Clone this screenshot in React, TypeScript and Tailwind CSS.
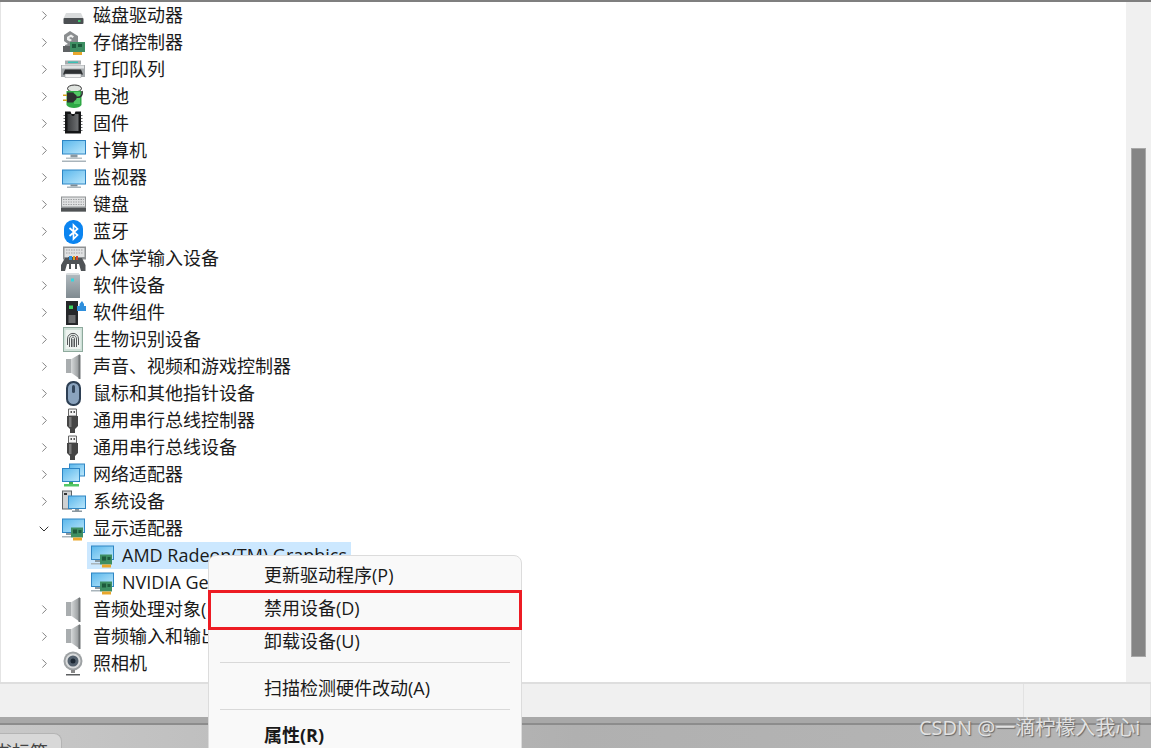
import { ChevronDown, ChevronRight } from 'lucide-react';

function Screen({ x, y, w, h }: { x: number; y: number; w: number; h: number }) {
  return (
    <>
      <rect x={x} y={y} width={w} height={h} fill="#2f86c4" />
      <rect x={x + 1} y={y + 1} width={w - 2} height={h - 2} fill="url(#screen)" />
    </>
  );
}

const CARD = (
  <>
    <path d="M11 11.500h12v10H11z" fill="#3e8f63" />
    <path d="M13 13.500h4v4h-4zM18.500 14h3v3h-3z" fill="#1e5a3c" />
    <path d="M13 21.500h9v3h-9z" fill="#e8a72c" />
  </>
);

const SPEAKER = (
  <>
    <path d="M6 5h5.500v14H6z" fill="#a9adaf" />
    <path d="M11.500 5L20 0v25l-8.500-6z" fill="url(#cone)" />
    <path d="M18.500 1H20.500v24h-2z" fill="#6f7375" />
  </>
);

const USB = (
  <>
    <path d="M8.500 1h8v7h-8z" fill="#f4f4f4" stroke="#666" />
    <path d="M10.500 3h1.500v2h-1.500zM13.500 3h1.500v2h-1.500z" fill="#555" />
    <path d="M7 8h11v10l-3 3v4h-5v-4l-3-3z" fill="#454545" />
    <path d="M9 9h2.500v10H9z" fill="#7a7a7a" />
  </>
);

const ICONS: Record<string, React.ReactNode> = {
  disk: (
    <>
      <path d="M6 10h15l2.500 5.500h-20z" fill="#d9dbdc" />
      <rect x="3.500" y="15" width="20" height="6" rx="1" fill="#4b4f52" />
      <rect x="18" y="17" width="2.500" height="2" fill="#3ec46d" />
    </>
  ),
  storage: (
    <>
      <path d="M10 1l8 5v6l-3 3 1 4H5v-4l3-1-4-3V5z" fill="#8a8d8f" />
      <path d="M7 7l4-2.500 3 2-1.500 1.500L11 7 9 8l3 2-2 1.500L7 10z" fill="#eceded" />
      <path d="M3 16h9v6H3z" fill="#5f6264" />
      <path d="M10 12h15v10H10z" fill="#3e8f63" />
      <path d="M12 14h4v4h-4zM18 14h4v3h-4z" fill="#1e5a3c" />
      <path d="M13 22h9v3h-9z" fill="#e8a72c" />
    </>
  ),
  printer: (
    <>
      <path d="M5 3.500h16v4H5z" fill="#a8acae" />
      <path d="M8 4.500h10v1.500H8z" fill="#39c0b5" />
      <path d="M1 8h24v12H1z" fill="#a4a8ab" />
      <path d="M2 8.500h22v3H2z" fill="#e0e2e3" />
      <path d="M5 12.500h16l2 5H3z" fill="#2e3133" />
      <path d="M5 17h16v3.500H5z" fill="#f3f3f3" stroke="#8d9194" strokeWidth=".5" />
    </>
  ),
  battery: (
    <>
      <ellipse cx="14.500" cy="4.500" rx="7" ry="3.500" fill="#dfe3df" stroke="#333" />
      <path d="M6.500 7h15v14c-2 4-13 4-15 0z" fill="#2fa845" />
      <path d="M14 8h6v12h-6z" fill="#52c765" />
      <path d="M8 9h4v3H8z" fill="#9fe6a0" />
      <path d="M3 10.500h4.500v1.500H3zM3 15.500h4.500V17H3z" fill="#d4a21e" />
      <path d="M7 8.500h6l3.500 3v3.500l-3.500 3.500H7z" fill="#2d2f31" />
      <path d="M16 13c4 1 7-1 6-6" fill="none" stroke="#2d2f31" strokeWidth="1.500" />
    </>
  ),
  chip: (
    <>
      <path d="M5 0.500h5.500l1 2.500h3l1-2.500H21v22H5z" fill="#141516" />
      <path d="M7.500 3H11l1 2h2l1-2h3.500v17h-11z" fill="url(#chip)" />
      <path d="M3.500 4H5v1H3.500zM3.500 7H5v1H3.500zM3.500 10H5v1H3.500zM3.500 13H5v1H3.500zM3.500 16H5v1H3.500zM3.500 19H5v1H3.500zM21 4h1.500v1H21zM21 7h1.500v1H21zM21 10h1.500v1H21zM21 13h1.500v1H21zM21 16h1.500v1H21zM21 19h1.500v1H21z" fill="#6b6d6f" />
    </>
  ),
  computer: (
    <>
      <Screen x={2} y={2} w={24} h={14.500} />
      <path d="M10.500 16.500h7v3h-7z" fill="#8b98a0" />
      <path d="M6 19.500h16V21H6z" fill="#b7c0c5" />
      <path d="M2 22.500h24V24H2z" fill="#a9b4bb" />
    </>
  ),
  monitor: (
    <>
      <Screen x={2} y={4.500} w={24} h={15} />
      <path d="M10.500 19.500h7v2h-7z" fill="#7d8b94" />
      <path d="M7 21.500h14V23H7z" fill="#a9b4bb" />
    </>
  ),
  keyboard: (
    <>
      <rect x="1" y="4.500" width="25" height="15" fill="#8f9294" />
      <rect x="2" y="5.500" width="23" height="9" fill="#e0e1e2" />
      <path d="M3 7.500h21M3 10h21M3 12.500h21" stroke="#a0a2a4" strokeDasharray="1.500 1" />
      <rect x="1" y="16" width="25" height="3.500" fill="#4f5254" />
    </>
  ),
  bluetooth: (
    <>
      <rect x="4" y="1" width="19" height="24" rx="9" fill="#0b84f0" />
      <path d="M9.500 9l8 7-4 4V6l4 4-8 7" fill="none" stroke="#fff" strokeWidth="1.700" />
    </>
  ),
  hid: (
    <>
      <rect x="3" y="0.500" width="23" height="13" fill="#8f9294" />
      <rect x="4.500" y="2" width="20" height="9" fill="#e0e1e2" />
      <path d="M6 4h17M6 7h17" stroke="#a0a2a4" strokeDasharray="1.500 1" />
      <path d="M5 12h3v-1h10v1h4l3.500 7v6H21l-2-7h-2v5h-2v-5h-4v5H9v-5H7l-2 7H1v-6z" fill="#4f5356" />
      <path d="M9 10h3v4H9z" fill="#2f8fdc" />
      <path d="M13 10h2v4h-2z" fill="#e0a020" />
      <path d="M16 10h2v4h-2z" fill="#d0432f" />
    </>
  ),
  softdev: (
    <>
      <path d="M7 0h11l2 2v23H6V2z" fill="url(#tower)" />
      <path d="M7 0h11l2 2H6z" fill="#d8dcde" />
      <rect x="11" y="5.500" width="3" height="3" fill="#34d6df" />
    </>
  ),
  softcomp: (
    <>
      <rect x="6" y="1" width="12" height="24" fill="#25272a" />
      <rect x="9" y="5.500" width="4" height="3.500" fill="#3ed35f" />
      <path d="M8.500 15h7v8h-7z" fill="#6a6c6e" />
      <path d="M17 6h2.500V4L22 1l2 3v2h2.500v5H17z" fill="#2f8fdc" />
    </>
  ),
  bio: (
    <>
      <rect x="3.500" y="0.500" width="19" height="24" fill="#cfe0d8" stroke="#8eaa9d" />
      <rect x="5.500" y="3" width="15" height="19" fill="#eef3f0" />
      <path d="M7.500 18v-6c0-7.500 11-7.500 11 0v6M9.500 20v-8c0-5 7-5 7 0v8M11.500 20v-8c0-2.500 3-2.500 3 0v8M13 20v-8" fill="none" stroke="#55585a" strokeWidth="1" />
    </>
  ),
  speaker: SPEAKER,
  mouse: (
    <>
      <rect x="6" y="0" width="15" height="25" rx="7" fill="#2d3f54" />
      <rect x="8" y="2" width="11" height="21" rx="5.500" fill="#8aa3be" />
      <rect x="12" y="4" width="3" height="8" rx="1.500" fill="#33465c" />
    </>
  ),
  usb: USB,
  network: (
    <>
      <rect x="9" y="1.500" width="16" height="13" fill="#2f86c4" />
      <rect x="10" y="2.500" width="14" height="11" fill="url(#screen)" />
      <rect x="2" y="6" width="18" height="14" fill="#2f86c4" />
      <rect x="3" y="7" width="16" height="12" fill="url(#screen)" />
      <path d="M9 20h4v2H9z" fill="#3fae4f" />
      <path d="M4 22h15v2.500H4z" fill="#53c765" />
    </>
  ),
  system: (
    <>
      <rect x="2" y="1.500" width="10" height="19" fill="#5f6466" />
      <rect x="3" y="2.500" width="8" height="17" fill="#cfd1d2" />
      <rect x="4" y="4" width="3" height="2" fill="#333" />
      <rect x="8" y="6.500" width="18" height="13.500" fill="#2f86c4" />
      <rect x="9" y="7.500" width="16" height="11.500" fill="url(#screen)" />
      <path d="M15 20h4v1.500h-4zM12 21.500h10V23H12z" fill="#8b98a0" />
    </>
  ),
  display: (
    <>
      <Screen x={2} y={2.500} w={23} h={14.500} />
      <path d="M6 17h6v2H6z" fill="#8b98a0" />
      <path d="M2 20h9v1.500H2z" fill="#a9b4bb" />
      {CARD}
    </>
  ),
  camera: (
    <>
      <circle cx="13" cy="10" r="9.500" fill="#9ea2a4" />
      <circle cx="13" cy="10" r="7.500" fill="#d9dbdc" />
      <circle cx="13" cy="10" r="5.500" fill="#53606d" />
      <circle cx="13" cy="10" r="2.500" fill="#1c2733" />
      <path d="M11 19h4v3h-4z" fill="#888" />
      <path d="M6 23h14v1.500H6z" fill="#5c5f61" />
    </>
  ),
};

const ROWS = [
  ['磁盘驱动器', 'disk'],
  ['存储控制器', 'storage'],
  ['打印队列', 'printer'],
  ['电池', 'battery'],
  ['固件', 'chip'],
  ['计算机', 'computer'],
  ['监视器', 'monitor'],
  ['键盘', 'keyboard'],
  ['蓝牙', 'bluetooth'],
  ['人体学输入设备', 'hid'],
  ['软件设备', 'softdev'],
  ['软件组件', 'softcomp'],
  ['生物识别设备', 'bio'],
  ['声音、视频和游戏控制器', 'speaker'],
  ['鼠标和其他指针设备', 'mouse'],
  ['通用串行总线控制器', 'usb'],
  ['通用串行总线设备', 'usb'],
  ['网络适配器', 'network'],
  ['系统设备', 'system'],
];

const AFTER = [
  ['音频处理对象(', 'speaker'],
  ['音频输入和输出', 'speaker'],
  ['照相机', 'camera'],
];

function Icon({ name }: { name: string }) {
  return (
    <svg width="26" height="26" viewBox="0 0 26 26" className="shrink-0">
      <defs>
        <linearGradient id="screen" x1="0" y1="0" x2="1" y2="1">
          <stop offset="0" stopColor="#5db8ec" />
          <stop offset="1" stopColor="#b9e6fb" />
        </linearGradient>
        <linearGradient id="cone" x1="0" y1="0" x2="1" y2="0">
          <stop offset="0" stopColor="#d2d5d6" />
          <stop offset="1" stopColor="#8d9193" />
        </linearGradient>
        <linearGradient id="chip" x1="0" y1="0" x2="1" y2="0">
          <stop offset="0" stopColor="#3a3c3e" />
          <stop offset="1" stopColor="#6f7173" />
        </linearGradient>
        <linearGradient id="tower" x1="0" y1="0" x2="0" y2="1">
          <stop offset="0" stopColor="#b4bdc2" />
          <stop offset="1" stopColor="#7f8a90" />
        </linearGradient>
      </defs>
      {ICONS[name]}
    </svg>
  );
}

function Row({ label, icon, open }: { label: string; icon: string; open?: boolean }) {
  return (
    <div className="flex h-[27px] items-center">
      <div className="flex w-[60px] justify-end pr-[8px]">
        {open ? (
          <ChevronDown size={16} strokeWidth={1.5} className="text-[#333]" />
        ) : (
          <ChevronRight size={15} strokeWidth={1.4} className="text-[#707070]" />
        )}
      </div>
      <Icon name={icon} />
      <span className="ml-[7px] whitespace-nowrap">{label}</span>
    </div>
  );
}

function DeviceRow({ label, selected }: { label: string; selected?: boolean }) {
  return (
    <div className="flex h-[27px] items-center pl-[87px]">
      <div className={`flex h-[27px] w-[264px] items-center gap-[7px] pl-[2px] ${selected ? 'bg-[#cce8ff]' : ''}`}>
        <Icon name="display" />
        <span className="whitespace-nowrap">{label}</span>
      </div>
    </div>
  );
}

function MenuItem({ label, bold }: { label: string; bold?: boolean }) {
  return (
    <div className={`flex h-[33px] items-center whitespace-nowrap pl-[55px] ${bold ? 'font-bold' : ''}`}>
      {label}
    </div>
  );
}

export default function App() {
  return (
    <div className="relative flex h-[748px] w-[1151px] flex-col overflow-hidden bg-white text-[18px] text-[#1a1a1a] [font-family:'Open_Sans','Noto_Sans_CJK_SC',sans-serif]">
      <div className="h-[2px] shrink-0 bg-[#7f7f7f]" />

      <div className="flex h-[680px] shrink-0 border-l border-[#e4e4e4]">
        <div className="-ml-px min-w-0 flex-1">
          {ROWS.map(([label, icon]) => (
            <Row key={label} label={label} icon={icon} />
          ))}
          <Row label="显示适配器" icon="display" open />
          <DeviceRow label="AMD Radeon(TM) Graphics" selected />
          <DeviceRow label="NVIDIA GeForce RTX" />
          {AFTER.map(([label, icon]) => (
            <Row key={label} label={label} icon={icon} />
          ))}
        </div>
        <div className="w-[25px] shrink-0 bg-[#f0f0f0] pl-[5px] pt-[146px]">
          <div className="h-[509px] w-[15px] border border-[#a8a8a8] bg-[#858585]" />
        </div>
      </div>

      <div className="flex h-[35px] shrink-0 justify-end border-t-2 border-[#dedede] bg-[#f0f0f0]">
        <div className="w-[193px] border-r border-[#e2e2e2]" />
        <div className="w-[127px] border-r border-[#e2e2e2]" />
      </div>

      <div className="h-[6px] shrink-0 bg-[#a8a8a8]" />
      <div className="h-[2px] shrink-0 bg-[#8c8c8c]" />
      <div className="flex-1 bg-linear-to-r from-[#c8c8c8] via-[#b0b0b0] to-[#b6b6b6] pt-[8px]">
        <div className="flex h-[20px] w-[62px] justify-end overflow-hidden rounded-tr-lg border-r border-t border-[#b4b4b4] bg-[#d8d8d8] pr-[13px] pt-[7px] text-[#444]">
          <span className="whitespace-nowrap leading-[22px]">书标签</span>
        </div>
      </div>

      <div className="absolute left-[208px] top-[555px] h-[200px] w-[314px] rounded-t-lg border border-[#dcdcdc] bg-[#f9f9f9] pt-[3px]">
        <MenuItem label="更新驱动程序(P)" />
        <MenuItem label="禁用设备(D)" />
        <MenuItem label="卸载设备(U)" />
        <div className="mx-[11px] mb-[9px] mt-[4px] h-px bg-[#d9d9d9]" />
        <MenuItem label="扫描检测硬件改动(A)" />
        <div className="mx-[11px] mb-[9px] mt-[4px] h-px bg-[#d9d9d9]" />
        <MenuItem label="属性(R)" bold />
      </div>

      <div className="absolute left-[208px] top-[590px] h-[40px] w-[314px] border-[3px] border-[#ed1c24]" />

      <div className="absolute left-[919px] top-[713px] whitespace-nowrap text-[20px] text-[#e2e2e2] [text-shadow:1px_1px_1px_#666]">
        CSDN @一滴柠檬入我心i
      </div>
    </div>
  );
}
